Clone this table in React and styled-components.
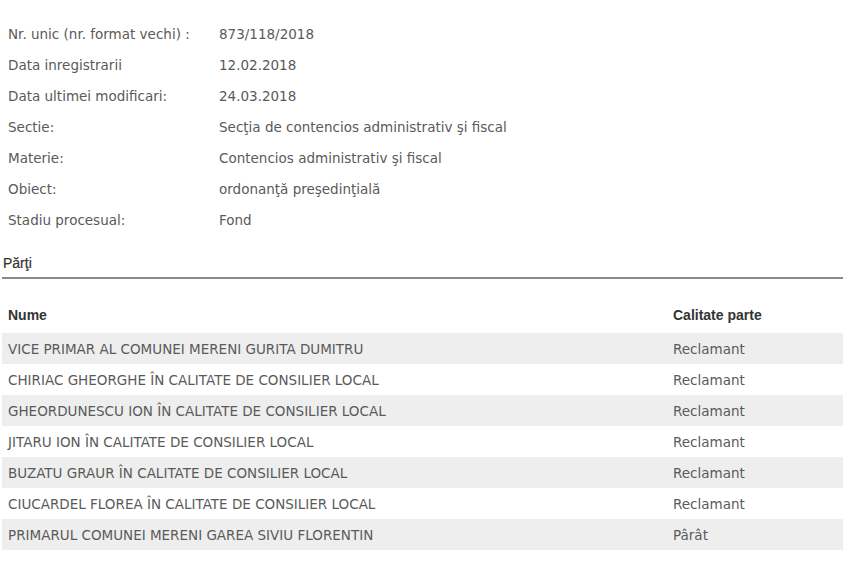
import React from 'react'
import styled, { createGlobalStyle } from 'styled-components'

const Global = createGlobalStyle`
    body {
        margin: 0;
        background: #ffffff;
    }
`

const Page = styled.div`
    width: 855px;
    padding: 18px 12px 0 2px;
    box-sizing: border-box;
`

const Info = styled.div`
    display: grid;
    grid-template-columns: 211px 1fr;
    grid-auto-rows: 31px;
    padding-left: 6px;
`

const Cell = styled.div`
    display: flex;
    align-items: center;
    font-family: "DejaVu Sans", Verdana, sans-serif;
    font-size: 13.5px;
    color: #5a5a5a;
`

const Section = styled.div`
    margin-top: 20px;
    padding: 0 0 6px 1px;
    border-bottom: 2px solid #8a8a8a;
    font-family: "Liberation Sans", Arial, sans-serif;
    font-size: 14px;
    color: #333333;
    -webkit-text-stroke: 0.2px #333333;
`

const Table = styled.div`
    margin-top: 21px;
    display: flex;
    flex-direction: column;
`

const Row = styled.div`
    display: grid;
    grid-template-columns: 665px 1fr;
    height: 31px;
    align-items: center;
    padding-left: 6px;
    background: ${p => (p.$shade ? '#eeeeee' : 'transparent')};
`

const Head = styled(Row)`
    height: 33px;
    box-sizing: border-box;
    padding-bottom: 4px;
    font-family: "Liberation Sans", Arial, sans-serif;
    font-weight: bold;
    font-size: 14px;
    color: #333333;
`

const Text = styled.span`
    font-family: "DejaVu Sans", Verdana, sans-serif;
    font-size: 13.5px;
    color: #5a5a5a;
`

const info = [
    ['Nr. unic (nr. format vechi) :', '873/118/2018'],
    ['Data inregistrarii', '12.02.2018'],
    ['Data ultimei modificari:', '24.03.2018'],
    ['Sectie:', 'Secţia de contencios administrativ şi fiscal'],
    ['Materie:', 'Contencios administrativ şi fiscal'],
    ['Obiect:', 'ordonanţă preşedinţială'],
    ['Stadiu procesual:', 'Fond'],
]

const parti = [
    ['VICE PRIMAR AL COMUNEI MERENI GURITA DUMITRU', 'Reclamant'],
    ['CHIRIAC GHEORGHE ÎN CALITATE DE CONSILIER LOCAL', 'Reclamant'],
    ['GHEORDUNESCU ION ÎN CALITATE DE CONSILIER LOCAL', 'Reclamant'],
    ['JITARU ION ÎN CALITATE DE CONSILIER LOCAL', 'Reclamant'],
    ['BUZATU GRAUR ÎN CALITATE DE CONSILIER LOCAL', 'Reclamant'],
    ['CIUCARDEL FLOREA ÎN CALITATE DE CONSILIER LOCAL', 'Reclamant'],
    ['PRIMARUL COMUNEI MERENI GAREA SIVIU FLORENTIN', 'Pârât'],
]

function App() {
    return (
        <Page>
            <Global />
            <Info>
                {info.map(([k, v]) => (
                    <React.Fragment key={k}>
                        <Cell>{k}</Cell>
                        <Cell>{v}</Cell>
                    </React.Fragment>
                ))}
            </Info>
            <Section>Părţi</Section>
            <Table>
                <Head>
                    <span>Nume</span>
                    <span>Calitate parte</span>
                </Head>
                {parti.map(([n, c], i) => (
                    <Row key={n} $shade={i % 2 === 0}>
                        <Text>{n}</Text>
                        <Text>{c}</Text>
                    </Row>
                ))}
            </Table>
        </Page>
    )
}
export default App
